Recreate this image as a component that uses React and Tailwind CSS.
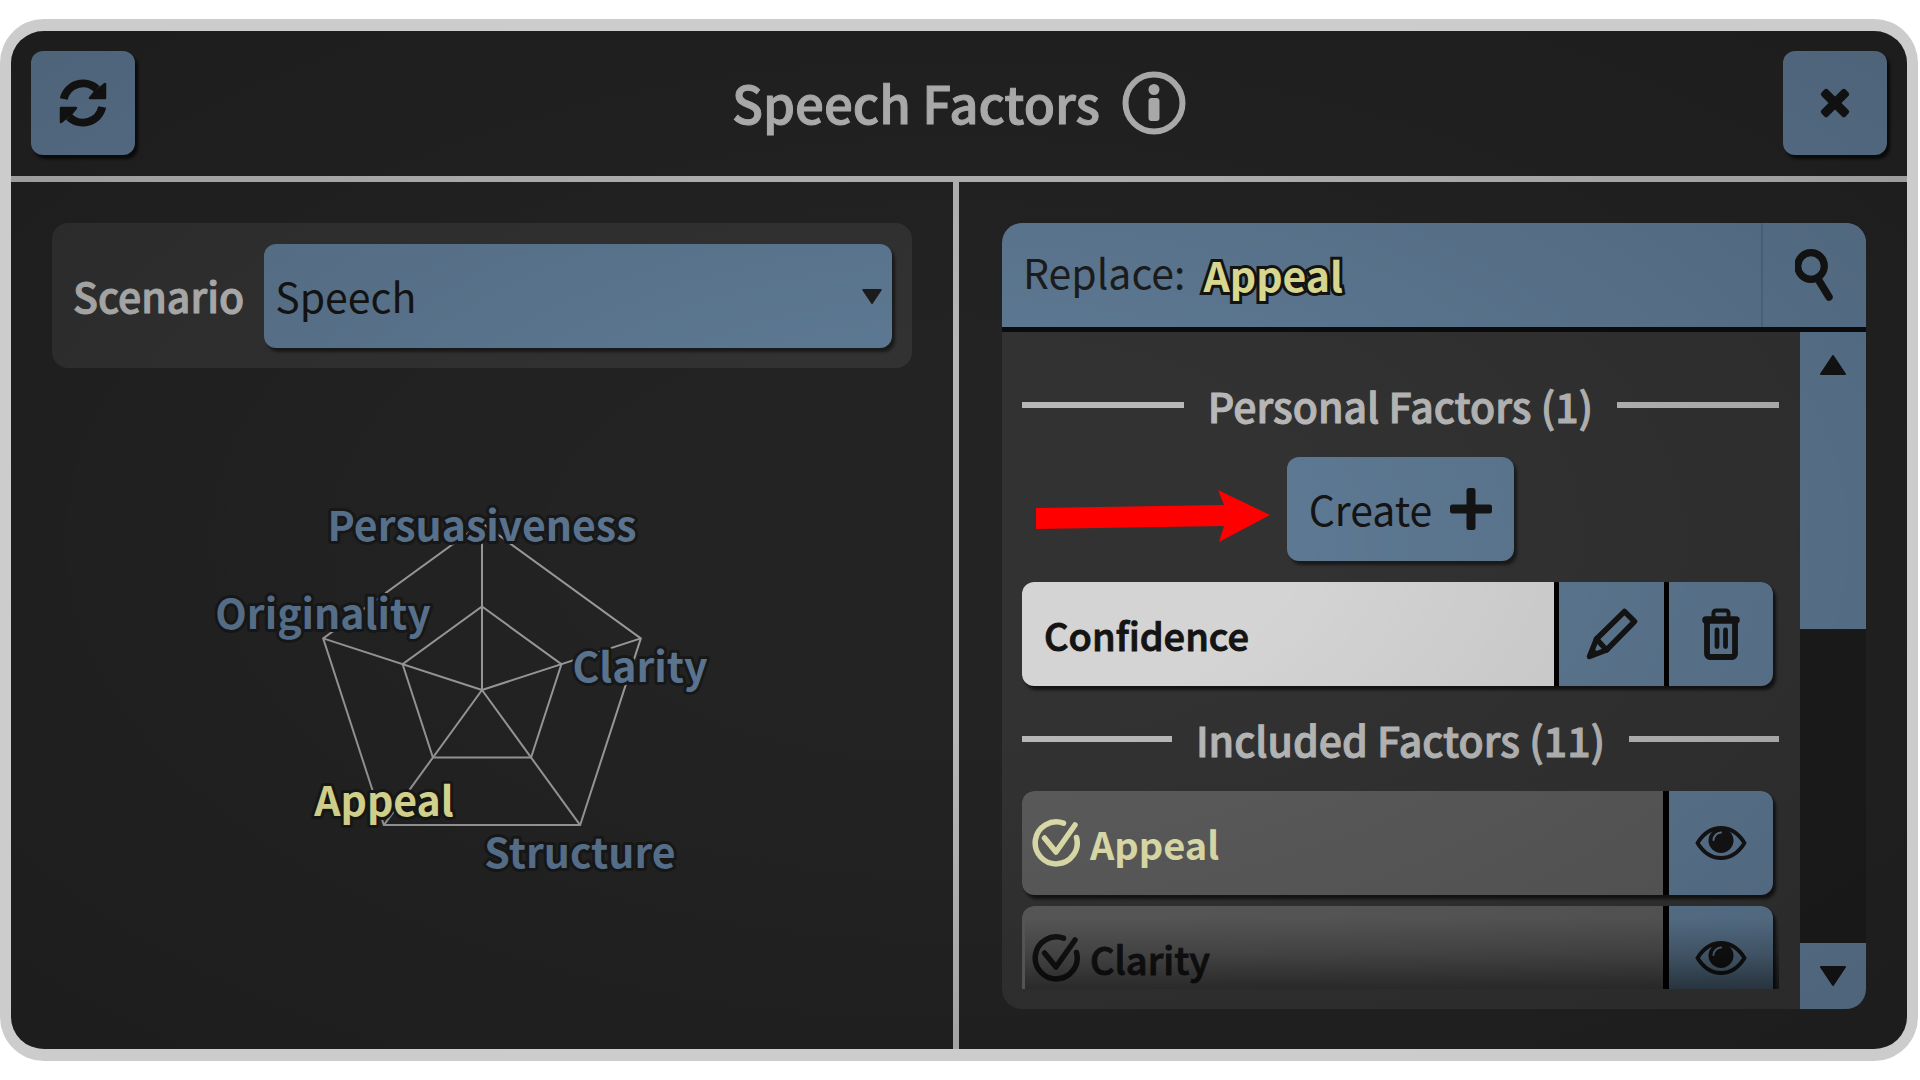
import { useState } from "react";

const BLUE_BUTTON =
  "flex items-center justify-center bg-[#5d7892] text-[#141414]";

function RefreshIcon() {
  return (
    <svg viewBox="0 0 48 48" className="w-12 h-12" fill="currentColor" stroke="currentColor">
      <path d="M4.8 20A19.7 19.7 0 0 1 38 10.2" fill="none" strokeWidth="8" />
      <path d="M46 5V19H31L35.5 13.5L40 10Z" strokeWidth="2.5" strokeLinejoin="round" />
      <path d="M43.2 28A19.7 19.7 0 0 1 10 37.8" fill="none" strokeWidth="8" />
      <path d="M2 43V29H17L12.5 34.5L8 38Z" strokeWidth="2.5" strokeLinejoin="round" />
    </svg>
  );
}

function CloseIcon() {
  return (
    <svg viewBox="-16 -16 32 32" className="w-8 h-8" fill="currentColor">
      <rect x="-17" y="-4.5" width="34" height="9" rx="2.5" transform="rotate(45)" />
      <rect x="-17" y="-4.5" width="34" height="9" rx="2.5" transform="rotate(-45)" />
    </svg>
  );
}

function InfoIcon() {
  return (
    <svg viewBox="0 0 64 64" className="w-16 h-16" fill="currentColor">
      <circle cx="32" cy="32" r="28.5" fill="none" stroke="currentColor" strokeWidth="6" />
      <circle cx="32" cy="18.5" r="5.5" />
      <rect x="26.5" y="27" width="11" height="23" rx="3" />
    </svg>
  );
}

function SearchIcon() {
  return (
    <svg viewBox="2 0 40 52" className="w-10 h-[52px]" fill="none" stroke="currentColor" strokeLinecap="round">
      <circle cx="18" cy="17" r="13.3" strokeWidth="7.2" />
      <path d="M25 30L36 48" strokeWidth="7.5" />
    </svg>
  );
}

function PlusIcon() {
  return (
    <svg viewBox="0 0 42 42" className="w-[42px] h-[42px]" fill="currentColor">
      <rect x="0" y="16.5" width="42" height="9" rx="2.5" />
      <rect x="16.5" y="0" width="9" height="42" rx="2.5" />
    </svg>
  );
}

function PencilIcon() {
  return (
    <svg viewBox="0 0 52 52" className="w-[52px] h-[52px]" fill="none" stroke="currentColor" strokeWidth="5.5" strokeLinejoin="round" strokeLinecap="round">
      <path d="M3.5 48.5L10.5 31L38.5 3.5L48.5 13.5L20.5 42Z" />
      <path d="M10.5 31L20.5 42" />
      <path d="M4 48L7 42L10 45.5Z" strokeWidth="4" fill="currentColor" />
    </svg>
  );
}

function TrashIcon() {
  return (
    <svg viewBox="0 0 38 52" className="w-[38px] h-[52px]" fill="none" stroke="currentColor">
      <path d="M11.5 9V5a2.5 2.5 0 0 1 2.5-2.5H24a2.5 2.5 0 0 1 2.5 2.5V9" strokeWidth="4" />
      <path d="M4 12H34" strokeWidth="7.5" strokeLinecap="round" />
      <path d="M5 13V46a3 3 0 0 0 3 3H30a3 3 0 0 0 3-3V13" strokeWidth="5.8" />
      <path d="M15 22V38.5M23.5 22V38.5" strokeWidth="4.8" strokeLinecap="round" />
    </svg>
  );
}

function EyeIcon() {
  return (
    <svg viewBox="0 0 52 34" className="w-[52px] h-[34px]">
      <path d="M2.5 17C15-3 37-3 49.5 17C37 37 15 37 2.5 17Z" fill="none" stroke="currentColor" strokeWidth="4" strokeLinejoin="round" />
      <circle cx="26" cy="14.5" r="12.5" fill="currentColor" />
      <path d="M18.5 14A8 8 0 0 1 26 6.5" fill="none" stroke="#5d7892" strokeWidth="2" strokeLinecap="round" />
    </svg>
  );
}

function CheckIcon() {
  return (
    <svg viewBox="0 0 48 48" className="w-12 h-12 shrink-0" fill="none" stroke="currentColor" strokeWidth="5.5" strokeLinecap="round" strokeLinejoin="round">
      <path d="M31.5 4.2A21 21 0 1 0 44.5 18.5" />
      <path d="M12.5 19L24 33L43 6" />
    </svg>
  );
}

function Triangle({ down, className }) {
  return (
    <svg viewBox="0 0 26 20" className={className} fill="currentColor" stroke="currentColor" strokeWidth="2" strokeLinejoin="round">
      <path d={down ? "M1 1H25L13 19Z" : "M1 19H25L13 1Z"} />
    </svg>
  );
}

const radarLabels = [
  { name: "Persuasiveness", x: 283, y: 41 },
  { name: "Clarity", x: 441, y: 182 },
  { name: "Structure", x: 381, y: 368 },
  { name: "Appeal", x: 185, y: 316 },
  { name: "Originality", x: 124, y: 129 },
];

function pentagon(r) {
  return [0, 1, 2, 3, 4].map((i) => {
    const a = (i * 72 * Math.PI) / 180;
    return [283 + r * Math.sin(a), 190 - r * Math.cos(a)];
  });
}

function RadarChart({ selected }) {
  const outer = pentagon(167);
  const inner = pentagon(83.5);

  return (
    <svg viewBox="0 -20 566 420" className="w-[566px] h-[420px]" role="img" aria-label="Factors">
      <g fill="none" stroke="#9a9a9a" strokeWidth="2">
        <polygon points={outer.join(" ")} />
        <polygon points={inner.join(" ")} />
        {outer.map(([x, y], i) => (
          <line key={i} x1="283" y1="190" x2={x} y2={y} />
        ))}
      </g>
      {radarLabels.map((l) => (
        <text
          key={l.name}
          x={l.x}
          y={l.y}
          textAnchor="middle"
          paintOrder="stroke"
          stroke="#181818"
          strokeWidth="6"
          strokeLinejoin="round"
          className={
            l.name === selected
              ? "text-[41px] font-bold fill-[#e0e096]"
              : "text-[41px] font-bold fill-[#5a7490]"
          }
        >
          {l.name}
        </text>
      ))}
    </svg>
  );
}

function SectionHeading({ children }) {
  return (
    <div className="flex items-center gap-6 h-[105px]">
      <span className="h-[6px] flex-1 bg-[#b8b8b8]" />
      <h2 className="text-[41px] leading-[56px] font-medium text-[#b8b8b8] [-webkit-text-stroke:1px_currentColor]">
        {children}
      </h2>
      <span className="h-[6px] flex-1 bg-[#b8b8b8]" />
    </div>
  );
}

function FactorRow({ name, selected, onSelect }) {
  return (
    <div className="flex h-[104px] mr-[6px] mb-[11px] shrink-0 rounded-xl overflow-hidden bg-black shadow-[3px_4px_3px_#141414]">
      <button
        onClick={() => onSelect(name)}
        className={
          selected
            ? "flex flex-1 items-center gap-[10px] pl-[10px] bg-[#5b5b5b] text-[38px] font-bold text-[#e0e0ac]"
            : "flex flex-1 items-center gap-[10px] pl-[10px] bg-[#5b5b5b] text-[38px] font-medium text-[#141414] [-webkit-text-stroke:1px_currentColor]"
        }
      >
        <CheckIcon />
        {name}
      </button>
      <button aria-label={"View " + name} className={BLUE_BUTTON + " w-[104px] ml-[6px]"}>
        <EyeIcon />
      </button>
    </div>
  );
}

export default function App() {
  const [scenario, setScenario] = useState("Speech");
  const [selected, setSelected] = useState("Appeal");

  return (
    <div className="h-screen bg-white py-[19px] pr-[2px] font-['Noto_Sans_CJK_SC','Noto_Sans',sans-serif]">
      <main className="relative flex flex-col h-full rounded-[44px] overflow-hidden border-x-[11px] border-y-[12px] border-[#cccccc] bg-[#232323]">
        <header className="flex items-center justify-between h-[151px] px-5 pb-[2px] border-b-[6px] border-[#b8b8b8] shrink-0">
          <button aria-label="Refresh" className={BLUE_BUTTON + " w-[104px] h-[104px] rounded-xl shadow-[3px_4px_3px_#0c0c0c]"}>
            <RefreshIcon />
          </button>
          <div className="flex items-center gap-[22px] text-[#b8b8b8]">
            <h1 className="pb-[2px] text-[51px] leading-[80px] font-medium [-webkit-text-stroke:1px_currentColor]">
              Speech Factors
            </h1>
            <InfoIcon />
          </div>
          <button aria-label="Close" className={BLUE_BUTTON + " w-[104px] h-[104px] rounded-xl shadow-[3px_4px_3px_#0c0c0c]"}>
            <CloseIcon />
          </button>
        </header>

        <div className="grid grid-cols-2 flex-1 min-h-0">
          <section className="flex flex-col px-[41px] py-[41px] border-r-[6px] border-[#b8b8b8]">
            <div className="flex items-center gap-5 h-[145px] rounded-2xl bg-[#323232] pl-[21px] pr-5">
              <label
                htmlFor="scenario"
                className="text-[41px] font-medium text-[#b8b8b8] [-webkit-text-stroke:1px_currentColor]"
              >
                Scenario
              </label>
              <div className="relative flex-1">
                <select
                  id="scenario"
                  value={scenario}
                  onChange={(e) => setScenario(e.target.value)}
                  className="appearance-none w-full h-[104px] px-[11px] rounded-xl bg-[#5d7892] text-[41px] text-[#141414] shadow-[3px_4px_3px_#1a1a1a]"
                >
                  <option>Speech</option>
                </select>
                <Triangle down className="absolute right-[10px] top-[45px] w-5 h-[15px] text-[#1c1c1c] pointer-events-none" />
              </div>
            </div>
            <div className="flex justify-center mt-28">
              <RadarChart selected={selected} />
            </div>
          </section>

          <section className="flex flex-col pt-[41px] pb-10 pl-[43px] pr-[41px] min-h-0">
            <div className="flex h-[109px] shrink-0 rounded-t-[20px] overflow-hidden bg-[#5d7892] border-b-[5px] border-[#0c0c0c]">
              <p className="flex flex-1 items-center gap-[18px] pl-[21px] text-[41px] text-[#1c1c1c]">
                <span className="pb-[6px]">Replace:</span>
                <span className="font-bold text-[#e0e096] [-webkit-text-stroke:6px_#141414] [paint-order:stroke_fill]">
                  {selected}
                </span>
              </p>
              <button aria-label="Search" className={BLUE_BUTTON + " w-[105px] border-l-2 border-[#526a82]"}>
                <SearchIcon />
              </button>
            </div>

            <div className="flex flex-1 min-h-0 rounded-b-[20px] overflow-hidden bg-[#323232]">
              <div className="flex-1 min-w-0 pl-5 pr-[21px] py-5">
                <div className="relative h-full overflow-hidden">
                  <SectionHeading>Personal Factors (1)</SectionHeading>
                  <div className="relative flex justify-center mb-[21px]">
                    <button className={BLUE_BUTTON + " gap-[18px] px-[22px] h-[104px] rounded-xl text-[41px] shadow-[3px_4px_3px_#1a1a1a]"}>
                      Create
                      <PlusIcon />
                    </button>
                    <svg viewBox="0 0 234 52" className="absolute left-[14px] top-[33px] w-[234px] h-[52px]" aria-hidden="true">
                      <path d="M0 18L188 15L182 0L234 25L183 52L188 36L0 39Z" fill="#ff0000" />
                    </svg>
                  </div>
                  <div className="flex h-[104px] mr-[6px] rounded-xl overflow-hidden bg-black gap-[5px] shadow-[3px_4px_3px_#141414]">
                    <button
                      onClick={() => setSelected("Confidence")}
                      className="flex-1 pl-[22px] bg-[#d4d4d4] text-left text-[38px] font-medium text-[#141414] [-webkit-text-stroke:1px_currentColor]"
                    >
                      Confidence
                    </button>
                    <button aria-label="Edit" className={BLUE_BUTTON + " w-[105px]"}>
                      <PencilIcon />
                    </button>
                    <button aria-label="Delete" className={BLUE_BUTTON + " w-[104px]"}>
                      <TrashIcon />
                    </button>
                  </div>

                  <SectionHeading>Included Factors (11)</SectionHeading>
                  <FactorRow name="Appeal" selected={selected === "Appeal"} onSelect={setSelected} />
                  <FactorRow name="Clarity" selected={selected === "Clarity"} onSelect={setSelected} />
                  <div className="absolute bottom-0 left-[3px] right-0 h-[72px] bg-linear-to-b from-transparent via-black/20 to-black/50 pointer-events-none" />
                </div>
              </div>

              <div className="flex flex-col w-[66px] bg-[#1c1c1c]">
                <button aria-label="Scroll up" className={BLUE_BUTTON + " h-[66px]"}>
                  <Triangle className="w-[26px] h-5" />
                </button>
                <div className="h-[231px] bg-[#5d7892]" />
                <button aria-label="Scroll down" className={BLUE_BUTTON + " h-[66px] mt-auto"}>
                  <Triangle down className="w-[26px] h-5" />
                </button>
              </div>
            </div>
          </section>
        </div>

        <div className="absolute inset-0 pointer-events-none bg-[radial-gradient(ellipse_at_center,transparent_25%,rgba(0,0,0,0.18)_100%)]" />
      </main>
    </div>
  );
}
